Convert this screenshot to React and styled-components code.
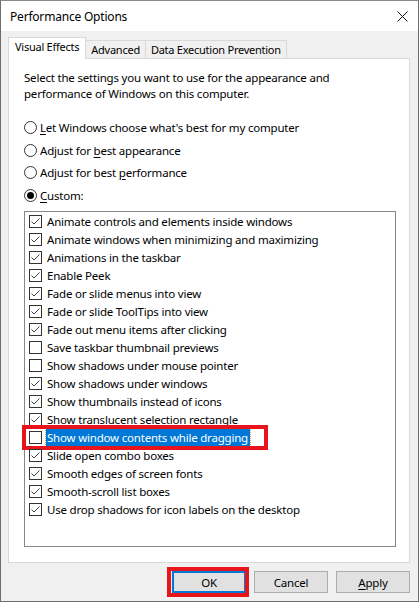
import React from 'react'
import styled, { createGlobalStyle } from 'styled-components'

const Global = createGlobalStyle`
    html, body {
        margin: 0;
        padding: 0;
        background: #ffffff;
    }
    body {
        font-family: "Noto Sans", "Segoe UI", sans-serif;
        font-size: 11.5px;
        letter-spacing: -0.2px;
        color: #000000;
    }
`

const Window = styled.div`
    box-sizing: border-box;
    width: 419px;
    height: 602px;
    display: flex;
    flex-direction: column;
    border: 1px solid #6e6e6e;
    border-top-color: #8a8a8a;
    background: #f0f0f0;
`
const TitleBar = styled.div`
    height: 30px;
    flex: none;
    display: flex;
    align-items: center;
    justify-content: space-between;
    padding: 0 10px 0 9px;
    background: #ffffff;
`
const Title = styled.span`
    font-size: 12px;
    color: #000;
`
const Body = styled.div`
    flex: 1;
    display: flex;
    flex-direction: column;
    padding: 6px 8px 0 7px;
`
const Tabs = styled.div`
    display: flex;
    align-items: flex-end;
    height: 22px;
    margin-bottom: -1px;
    position: relative;
    z-index: 1;
`
const Tab = styled.div`
    box-sizing: border-box;
    height: ${p => (p.$active ? '22px' : '19px')};
    padding: 0 ${p => (p.$active ? '6px' : '5px')};
    display: flex;
    align-items: center;
    font-size: 11px;
    letter-spacing: -0.25px;
    border: 1px solid #d9d9d9;
    border-bottom: ${p => (p.$active ? 'none' : '1px solid #d9d9d9')};
    border-left-width: ${p => (p.$first ? '1px' : '0')};
    background: ${p => (p.$active ? '#ffffff' : '#f0f0f0')};
    padding-bottom: ${p => (p.$active ? '4px' : '0')};
    white-space: nowrap;
`
const Panel = styled.div`
    box-sizing: border-box;
    height: 505px;
    border: 1px solid #d9d9d9;
    background: #ffffff;
    padding: 11px 13px 15px 15px;
    display: flex;
    flex-direction: column;
`
const Intro = styled.p`
    margin: 0;
    line-height: 16px;
`
const Options = styled.div`
    display: flex;
    flex-direction: column;
    gap: 7.5px;
    margin-top: 18px;
    margin-bottom: 8px;
`
const RadioRow = styled.label`
    display: flex;
    align-items: center;
    height: 15px;
    gap: 3px;
`
const Radio = styled.span`
    box-sizing: border-box;
    width: 13px;
    height: 13px;
    border-radius: 50%;
    border: 1px solid #333333;
    background: #fff;
    display: flex;
    align-items: center;
    justify-content: center;
    &::after {
        content: '';
        width: 7px;
        height: 7px;
        border-radius: 50%;
        background: ${p => (p.$on ? '#000' : 'transparent')};
    }
`
const ListBox = styled.div`
    flex: 1;
    box-sizing: border-box;
    border: 1px solid #828790;
    padding: 1px 0 0 4px;
    display: flex;
    flex-direction: column;
`
const Row = styled.div`
    position: relative;
    display: flex;
    align-items: center;
    height: 18px;
    gap: 4px;
`
const Box = styled.span`
    box-sizing: border-box;
    width: 13px;
    height: 13px;
    flex: none;
    border: 1px solid #333333;
    background: #fff;
    display: flex;
    align-items: center;
    justify-content: center;
`
const Label = styled.span`
    padding: 0 2px 0 1px;
    line-height: 17px;
    white-space: nowrap;
    background: ${p => (p.$selected ? '#0078d7' : 'transparent')};
    color: ${p => (p.$selected ? '#ffffff' : '#000000')};
    outline: ${p => (p.$selected ? '1px dotted #e0a050' : 'none')};
`
const Marker = styled.span`
    position: absolute;
    left: -7px;
    top: -4px;
    width: 246px;
    height: 25px;
    box-sizing: border-box;
    border: 4px solid #e8141c;
    pointer-events: none;
`
const Buttons = styled.div`
    display: flex;
    justify-content: flex-end;
    gap: 8px;
    margin-top: 8px;
`
const Button = styled.button`
    position: relative;
    box-sizing: border-box;
    width: 74px;
    height: 22px;
    font-family: inherit;
    font-size: 11.5px;
    letter-spacing: -0.2px;
    color: #000;
    background: #e1e1e1;
    border: ${p => (p.$default ? '2px solid #0078d7' : '1px solid #adadad')};
    padding: 0;
    &::after {
        content: ${p => (p.$marked ? "''" : 'none')};
        position: absolute;
        left: -7px;
        top: -6px;
        right: -5px;
        bottom: -6px;
        border: 4px solid #e8141c;
    }
`
const U = styled.span`
    text-decoration: underline;
    text-underline-offset: 2px;
`

const Check = () => (
    <svg width="11" height="11" viewBox="0 0 11 11">
        <path d="M1.5 5.5 L4 8 L9.5 2.5" fill="none" stroke="#444" strokeWidth="1" />
    </svg>
)

const effects = [
    ['Animate controls and elements inside windows', true],
    ['Animate windows when minimizing and maximizing', true],
    ['Animations in the taskbar', true],
    ['Enable Peek', true],
    ['Fade or slide menus into view', true],
    ['Fade or slide ToolTips into view', true],
    ['Fade out menu items after clicking', true],
    ['Save taskbar thumbnail previews', false],
    ['Show shadows under mouse pointer', false],
    ['Show shadows under windows', true],
    ['Show thumbnails instead of icons', true],
    ['Show translucent selection rectangle', true],
    ['Show window contents while dragging', false, true],
    ['Slide open combo boxes', true],
    ['Smooth edges of screen fonts', true],
    ['Smooth-scroll list boxes', true],
    ['Use drop shadows for icon labels on the desktop', true],
]

const App = () => {
    return (
        <>
            <Global />
            <Window>
                <TitleBar>
                    <Title>Performance Options</Title>
                    <svg width="11" height="11" viewBox="0 0 11 11">
                        <path d="M0.5 0.5 L10.5 10.5 M10.5 0.5 L0.5 10.5" stroke="#111" strokeWidth="1" />
                    </svg>
                </TitleBar>
                <Body>
                    <Tabs>
                        <Tab $active $first>Visual Effects</Tab>
                        <Tab>Advanced</Tab>
                        <Tab>Data Execution Prevention</Tab>
                    </Tabs>
                    <Panel>
                        <Intro>
                            Select the settings you want to use for the appearance and
                            <br />
                            performance of Windows on this computer.
                        </Intro>
                        <Options>
                            <RadioRow><Radio /><span><U>L</U>et Windows choose what's best for my computer</span></RadioRow>
                            <RadioRow><Radio /><span>Adjust for <U>b</U>est appearance</span></RadioRow>
                            <RadioRow><Radio /><span>Adjust for best <U>p</U>erformance</span></RadioRow>
                            <RadioRow><Radio $on /><span><U>C</U>ustom:</span></RadioRow>
                        </Options>
                        <ListBox>
                            {effects.map(([text, on, selected]) => (
                                <Row key={text}>
                                    <Box>{on && <Check />}</Box>
                                    <Label $selected={selected}>{text}</Label>
                                    {selected && <Marker />}
                                </Row>
                            ))}
                        </ListBox>
                    </Panel>
                    <Buttons>
                        <Button $default $marked>OK</Button>
                        <Button>Cancel</Button>
                        <Button><U>A</U>pply</Button>
                    </Buttons>
                </Body>
            </Window>
        </>
    )
}

export default App
